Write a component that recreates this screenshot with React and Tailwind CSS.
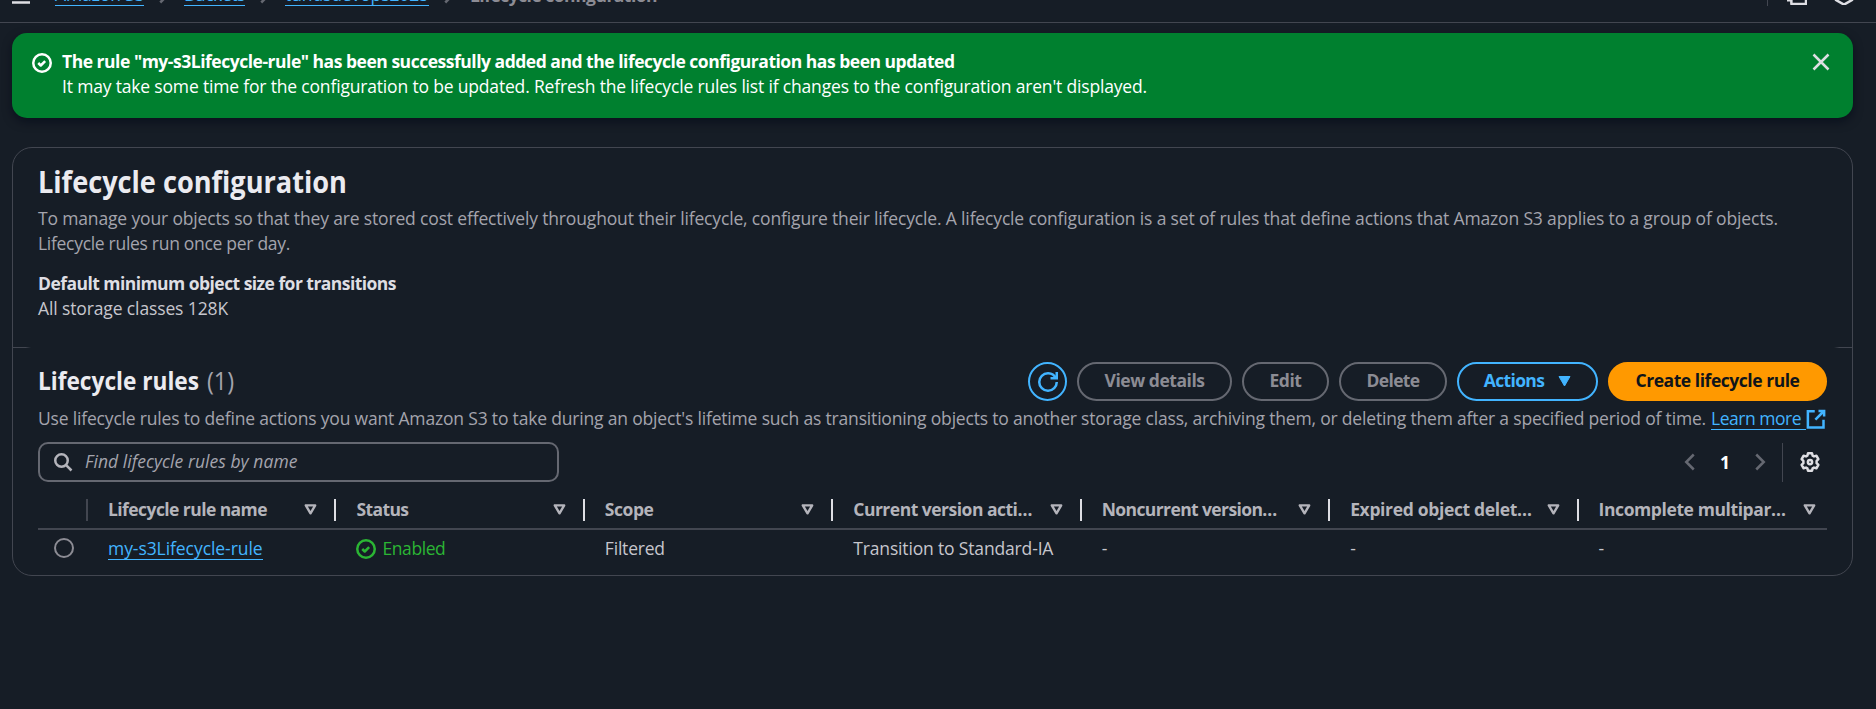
const stroke = { fill: 'none', stroke: 'currentColor', strokeWidth: 2, strokeLinejoin: 'round' };

function Icon({ className, children }) {
  return (
    <svg viewBox="0 0 16 16" className={'block shrink-0 ' + className} {...stroke}>
      {children}
    </svg>
  );
}

const CheckCircle = ({ className }) => (
  <Icon className={className}>
    <circle cx="8" cy="8" r="7" />
    <path d="m5 8 2 2 3.521-3.521" />
  </Icon>
);

const AngleRight = ({ className }) => (
  <Icon className={className}>
    <path strokeLinejoin="miter" d="m5 2 6 6-6 6" />
  </Icon>
);

const AngleLeft = ({ className }) => (
  <Icon className={className}>
    <path strokeLinejoin="miter" d="M11 2 5 8l6 6" />
  </Icon>
);

const columns = [
  { label: 'Lifecycle rule name', tracking: 'tracking-[-0.568px]' },
  { label: 'Status', tracking: 'tracking-[-0.6px]' },
  { label: 'Scope', tracking: 'tracking-[-0.478px]' },
  { label: 'Current version acti…', tracking: 'tracking-[-0.503px]' },
  { label: 'Noncurrent version…', tracking: 'tracking-[-0.607px]' },
  { label: 'Expired object delet…', tracking: 'tracking-[-0.339px]' },
  { label: 'Incomplete multipar…', tracking: 'tracking-[-0.404px]' },
];

const cols = 'grid grid-cols-[50px_repeat(7,minmax(0,1fr))]';
const pill = 'flex h-[39px] items-center justify-center rounded-full border-2 pb-[2px] font-bold';
const crumb = 'border-b border-[#42b4ff] leading-[21px]';

function TopBar() {
  return (
    <header className="h-[23px] overflow-hidden border-b border-[#424650]">
      <div className="-mt-[18px] flex h-[26px] items-center pl-[11px]">
        <Icon className="size-5 text-[#dedee3]">
          <path d="M0.8 2h14.4M0.8 8h14.4M0.8 14h14.4" />
        </Icon>
        <nav className="ml-6 flex items-center text-[#42b4ff]">
          <a className={crumb + ' w-[89px] tracking-[-0.1px]'}>Amazon S3</a>
          <AngleRight className="mx-[10px] size-5 text-[#656871]" />
          <a className={crumb + ' w-[61px] tracking-[-0.433px]'}>Buckets</a>
          <AngleRight className="mx-[10px] size-5 text-[#656871]" />
          <a className={crumb + ' w-[144px] tracking-[-0.108px]'}>tundsdevops2025</a>
          <AngleRight className="mr-[11px] ml-[10px] size-5 text-[#656871]" />
          <span className="font-bold tracking-[-0.528px] text-[#8c8c94]">Lifecycle configuration</span>
        </nav>
        <div className="ml-auto flex items-center">
          <div className="-mt-[4px] h-[25px] w-px bg-[#424650]" />
          <Icon className="ml-[19px] size-5 text-[#dedee3]">
            <path d="M3.5 5h11.700v10.200H3.500zM0 12.200h3.500M1 12V1h11" />
          </Icon>
          <Icon className="mr-[22px] ml-[27px] size-5 text-[#dedee3]">
            <path strokeLinejoin="miter" d="M8 1l6.400 3.700v7.300L8 15.700 1.600 12V4.700z" />
          </Icon>
        </div>
      </div>
    </header>
  );
}

function Banner() {
  return (
    <section className="mr-[23px] ml-3 mt-[10px] flex h-[85px] rounded-[15px] bg-[#00802f] pt-4 pl-5 text-white shadow-[0_4px_10px_rgba(0,7,22,0.55)]">
      <CheckCircle className="mt-1 size-5" />
      <div className="ml-[10px] flex-1">
        <p className="font-bold tracking-[-0.48px]">
          The rule "my-s3Lifecycle-rule" has been successfully added and the lifecycle configuration has been updated
        </p>
        <p className="tracking-[-0.175px]">
          It may take some time for the configuration to be updated. Refresh the lifecycle rules list if changes to the configuration aren't displayed.
        </p>
      </div>
      <Icon className="mt-[3px] mr-[22px] size-5 text-[#dedee3]">
        <path d="m2 2 12 12M14 2 2 14" />
      </Icon>
    </section>
  );
}

function RulesHeader() {
  return (
    <div className="flex h-[39px] items-start">
      <h2 className="mt-[3px] w-[169px] text-[25px] leading-[30px] font-bold text-[#ebebf0]">
        <span className="inline-block origin-left scale-x-[0.906]">Lifecycle rules</span>
      </h2>
      <span className="mt-[3px] origin-left scale-x-[0.93] text-[25px] leading-[30px] text-[#a4a4ad]">(1)</span>
      <div className="ml-auto flex gap-[10px] text-[#8c8c94]">
        <button className="flex size-[39px] items-center justify-center rounded-full border-2 border-[#42b4ff] text-[#42b4ff]">
          <Icon className="size-5">
            <path strokeLinejoin="miter" d="M10 5h5V0" />
            <path d="M15 8a6.957 6.957 0 0 1-7 7 6.957 6.957 0 0 1-7-7 6.957 6.957 0 0 1 7-7 6.870 6.870 0 0 1 6.300 4" />
          </Icon>
        </button>
        <button className={pill + ' w-[155px] border-[#656871] tracking-[-0.462px]'}>View details</button>
        <button className={pill + ' w-[87px] border-[#656871] tracking-[-0.453px]'}>Edit</button>
        <button className={pill + ' w-[108px] border-[#656871] tracking-[-0.654px]'}>Delete</button>
        <button className={pill + ' w-[141px] gap-[14px] border-[#42b4ff] tracking-[-0.65px] text-[#42b4ff]'}>
          Actions
          <svg viewBox="0 0 13 11" className="mt-[2px] h-[11px] w-[13px] fill-current">
            <path d="M1 .5h11L6.500 10z" stroke="currentColor" strokeLinejoin="round" />
          </svg>
        </button>
        <button className={pill + ' w-[219px] border-[#ff9900] bg-[#ff9900] tracking-[-0.457px] text-[#0f141a]'}>
          Create lifecycle rule
        </button>
      </div>
    </div>
  );
}

function FilterBar() {
  return (
    <div className="mt-[11px] flex h-10 items-center">
      <div className="flex h-10 w-[521px] items-center rounded-[10px] border-2 border-[#656871] pb-px pl-[13px] text-[#a4a4ad]">
        <Icon className="size-5 text-[#b4b4bb]">
          <circle cx="6.800" cy="6.800" r="5" />
          <path d="m10.500 10.500 4.300 4.300" />
        </Icon>
        <span className="ml-[12px] tracking-[0.053px] italic">Find lifecycle rules by name</span>
      </div>
      <div className="ml-auto flex items-center text-[#656871]">
        <AngleLeft className="size-5" />
        <span className="w-[50px] text-center font-bold text-white">1</span>
        <AngleRight className="size-5" />
        <div className="ml-[12px] h-[39px] w-px bg-[#424650]" />
        <Icon className="mr-[7px] ml-[17px] size-5 text-[#dedee3]">
          <path d="M6.400 1h3.200l.5 1.900 1.100.6 1.900-.5 1.600 2.700-1.400 1.400v1.800l1.400 1.400-1.600 2.700-1.900-.5-1.100.6-.5 1.900H6.400l-.5-1.900-1.100-.6-1.900.5-1.600-2.700 1.400-1.400V7.100L1.300 5.700 2.900 3l1.900.5 1.100-.6z" />
          <circle cx="8" cy="8" r="1.700" />
        </Icon>
      </div>
    </div>
  );
}

function RulesTable() {
  return (
    <div>
      <div className={cols + ' border-b-2 border-[#424650] pt-[15px] pb-[6px] font-bold text-[#b4b4bb]'}>
        <div className="flex items-center justify-end">
          <i className="h-[22px] w-[2px] bg-[#424650]" />
        </div>
        {columns.map((c, i) => (
          <div key={c.label} className="flex items-center pl-5">
            <span className={c.tracking}>{c.label}</span>
            <svg
              viewBox="0 0 13 11"
              className={'ml-auto h-[11px] w-[13px] ' + (i < 6 ? 'mr-[17px]' : 'mr-[11px]')}
              {...stroke}
              strokeWidth="2.400"
            >
              <path d="M1.800 1.400h9.400L6.500 9.300z" />
            </svg>
            {i < 6 && <i className="h-[22px] w-[2px] bg-[#dedee3]" />}
          </div>
        ))}
      </div>
      <div className={cols + ' pt-[6px] pb-[14px] text-[#c6c6cd] [&>div]:pl-5'}>
        <span className="mt-[2px] ml-4 size-5 rounded-full border-2 border-[#8c8c94]" />
        <div>
          <a className="inline-block h-6 border-b border-[#42b4ff] tracking-[-0.066px] text-[#42b4ff]">my-s3Lifecycle-rule</a>
        </div>
        <div className="flex text-[#2bb534]">
          <CheckCircle className="mt-[3px] size-5" />
          <span className="ml-[6px] tracking-[-0.406px]">Enabled</span>
        </div>
        <div className="tracking-[-0.203px]">Filtered</div>
        <div className="tracking-[-0.158px]">Transition to Standard-IA</div>
        <div>-</div>
        <div>-</div>
        <div>-</div>
      </div>
    </div>
  );
}

export default function App() {
  return (
    <div className="h-[709px] overflow-hidden bg-[#161d26] font-['Open_Sans',sans-serif] text-[17.5px] leading-[25px] whitespace-nowrap text-[#c6c6cd]">
      <TopBar />
      <Banner />
      <main className="mt-[29px] mr-[23px] ml-3 h-[429px] rounded-[20px] border border-[#424650]">
        <section className="h-[199px] px-[25px] pt-[15px]">
          <h1 className="text-[30px] leading-[37px] font-bold text-[#ebebf0]">
            <span className="inline-block origin-left scale-x-[0.905]">Lifecycle configuration</span>
          </h1>
          <div className="mt-[6px] text-[#a4a4ad]">
            <p className="tracking-[-0.154px]">
              To manage your objects so that they are stored cost effectively throughout their lifecycle, configure their lifecycle. A lifecycle configuration is a set of rules that define actions that Amazon S3 applies to a group of objects.
            </p>
            <p className="tracking-[-0.297px]">Lifecycle rules run once per day.</p>
          </div>
          <p className="mt-[15px] font-bold tracking-[-0.543px] text-[#dedee3]">Default minimum object size for transitions</p>
          <p className="tracking-[-0.123px]">All storage classes 128K</p>
        </section>
        <div className="flex h-px justify-between">
          <i className="w-[18px] bg-linear-to-r from-[#424650] from-70% to-transparent" />
          <i className="w-[18px] bg-linear-to-l from-[#424650] from-70% to-transparent" />
        </div>
        <section className="px-[25px] pt-[14px]">
          <RulesHeader />
          <div className="mt-[5px] flex text-[#a4a4ad]">
            <span className="tracking-[-0.179px]">
              Use lifecycle rules to define actions you want Amazon S3 to take during an object's lifetime such as transitioning objects to another storage class, archiving them, or deleting them after a specified period of time.
            </span>
            <a className="ml-[5px] flex text-[#42b4ff]">
              <span className="h-6 w-[95px] border-b border-[#42b4ff] tracking-[-0.483px]">Learn more</span>
              <Icon className="mt-[3px] size-5">
                <path strokeLinejoin="miter" d="M14 8.500v6.300H1.500V1.700H7M10 1.500h4.500V6M14 2 7.500 8.500" />
              </Icon>
            </a>
          </div>
          <FilterBar />
          <RulesTable />
        </section>
      </main>
    </div>
  );
}
